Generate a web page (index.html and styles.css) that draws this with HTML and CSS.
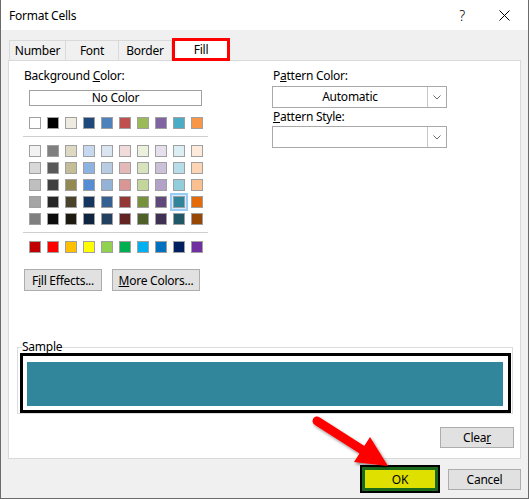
FILE: index.html
```html
<!DOCTYPE html>
<html>
<head>
<meta charset="utf-8">
<link rel="stylesheet" href="styles.css">
</head>
<body>
<div class="dialog">
  <div class="titlebar">
    <span class="title">Format Cells</span>
    <span class="help">?</span>
    <svg class="close" width="11" height="11" viewBox="0 0 11 11"><path d="M0.5 0.5 L10.5 10.5 M10.5 0.5 L0.5 10.5" stroke="#000" stroke-width="1" fill="none"/></svg>
  </div>
  <div class="tabs">
    <div class="tab tab-number">Number</div>
    <div class="tab tab-font">Font</div>
    <div class="tab tab-border">Border</div>
    <div class="tab active">Fill</div>
  </div>
  <div class="panel">
    <div class="top">
      <div class="bgcol">
        <div class="label">Background <u>C</u>olor:</div>
        <div class="nocolor">No Color</div>
        <div class="swrow">
          <span class="sw" style="background:#FFFFFF"></span>
          <span class="sw" style="background:#000000"></span>
          <span class="sw" style="background:#EEECE1"></span>
          <span class="sw" style="background:#1F497D"></span>
          <span class="sw" style="background:#4F81BD"></span>
          <span class="sw" style="background:#C0504D"></span>
          <span class="sw" style="background:#9BBB59"></span>
          <span class="sw" style="background:#8064A2"></span>
          <span class="sw" style="background:#4BACC6"></span>
          <span class="sw" style="background:#F79646"></span>
        </div>
        <div class="sep"></div>
        <div class="grid">
          <span class="sw" style="background:#F2F2F2"></span>
          <span class="sw" style="background:#7F7F7F"></span>
          <span class="sw" style="background:#DDD9C3"></span>
          <span class="sw" style="background:#C6D9F0"></span>
          <span class="sw" style="background:#DBE5F1"></span>
          <span class="sw" style="background:#F2DCDB"></span>
          <span class="sw" style="background:#EBF1DD"></span>
          <span class="sw" style="background:#E5E0EC"></span>
          <span class="sw" style="background:#DBEEF3"></span>
          <span class="sw" style="background:#FDEADA"></span>

          <span class="sw" style="background:#D8D8D8"></span>
          <span class="sw" style="background:#595959"></span>
          <span class="sw" style="background:#C4BD97"></span>
          <span class="sw" style="background:#8DB3E2"></span>
          <span class="sw" style="background:#B8CCE4"></span>
          <span class="sw" style="background:#E5B9B7"></span>
          <span class="sw" style="background:#D7E3BC"></span>
          <span class="sw" style="background:#CCC1D9"></span>
          <span class="sw" style="background:#B7DDE8"></span>
          <span class="sw" style="background:#FBD5B5"></span>

          <span class="sw" style="background:#BFBFBF"></span>
          <span class="sw" style="background:#3F3F3F"></span>
          <span class="sw" style="background:#938953"></span>
          <span class="sw" style="background:#548DD4"></span>
          <span class="sw" style="background:#95B3D7"></span>
          <span class="sw" style="background:#D99694"></span>
          <span class="sw" style="background:#C3D69B"></span>
          <span class="sw" style="background:#B2A2C7"></span>
          <span class="sw" style="background:#92CDDC"></span>
          <span class="sw" style="background:#FAC08F"></span>

          <span class="sw" style="background:#A5A5A5"></span>
          <span class="sw" style="background:#262626"></span>
          <span class="sw" style="background:#494429"></span>
          <span class="sw" style="background:#17365D"></span>
          <span class="sw" style="background:#366092"></span>
          <span class="sw" style="background:#953734"></span>
          <span class="sw" style="background:#76923C"></span>
          <span class="sw" style="background:#5F497A"></span>
          <span class="sw selected" style="background:#31859B"></span>
          <span class="sw" style="background:#E36C09"></span>

          <span class="sw" style="background:#7F7F7F"></span>
          <span class="sw" style="background:#0C0C0C"></span>
          <span class="sw" style="background:#1D1B10"></span>
          <span class="sw" style="background:#0F243E"></span>
          <span class="sw" style="background:#244061"></span>
          <span class="sw" style="background:#632423"></span>
          <span class="sw" style="background:#4F6128"></span>
          <span class="sw" style="background:#3F3151"></span>
          <span class="sw" style="background:#205867"></span>
          <span class="sw" style="background:#974806"></span>
        </div>
        <div class="sep"></div>
        <div class="swrow">
          <span class="sw" style="background:#C00000"></span>
          <span class="sw" style="background:#FF0000"></span>
          <span class="sw" style="background:#FFC000"></span>
          <span class="sw" style="background:#FFFF00"></span>
          <span class="sw" style="background:#92D050"></span>
          <span class="sw" style="background:#00B050"></span>
          <span class="sw" style="background:#00B0F0"></span>
          <span class="sw" style="background:#0070C0"></span>
          <span class="sw" style="background:#002060"></span>
          <span class="sw" style="background:#7030A0"></span>
        </div>
        <div class="btns">
          <div class="btn btn-fill">F<u>i</u>ll Effects...</div>
          <div class="btn btn-more"><u>M</u>ore Colors...</div>
        </div>
      </div>
      <div class="pattern">
        <div class="plabel">P<u>a</u>ttern Color:</div>
        <div class="select">
          <span class="val">Automatic</span>
          <span class="arr"><svg width="8" height="5" viewBox="0 0 8 5"><path d="M0.5 0.5 L4 4 L7.5 0.5" stroke="#6a6a6a" stroke-width="1" fill="none"/></svg></span>
        </div>
        <div class="plabel plabel2"><u>P</u>attern Style:</div>
        <div class="select select2">
          <span class="val"></span>
          <span class="arr"><svg width="8" height="5" viewBox="0 0 8 5"><path d="M0.5 0.5 L4 4 L7.5 0.5" stroke="#6a6a6a" stroke-width="1" fill="none"/></svg></span>
        </div>
      </div>
    </div>
    <fieldset class="sample">
      <legend>Sample</legend>
      <div class="samplebox"><div class="fillc"></div></div>
    </fieldset>
    <div class="clearrow"><div class="btn btn-clear">Clea<u>r</u></div></div>
  </div>
  <div class="footer">
    <div class="btn btn-ok">OK</div>
    <div class="btn btn-cancel">Cancel</div>
  </div>
  <svg class="arrow" width="529" height="499" viewBox="0 0 529 499">
    <defs>
      <filter id="sh" x="-20%" y="-20%" width="140%" height="140%">
        <feDropShadow dx="1.5" dy="2" stdDeviation="1.5" flood-color="#000" flood-opacity="0.45"/>
      </filter>
    </defs>
    <g filter="url(#sh)">
      <line x1="317" y1="421" x2="364" y2="451" stroke="#f00" stroke-width="9" stroke-linecap="round"/>
      <polygon points="388,466 354,462 370,437" fill="#f00"/>
    </g>
  </svg>
</div>
</body>
</html>
```

FILE: styles.css
```css
body {
  margin: 0;
  font-family: "Segoe UI", "Noto Sans", sans-serif;
  font-size: 12px;
  letter-spacing: -0.25px;
  color: #000;
}

.dialog {
  position: relative;
  width: 529px;
  height: 499px;
  box-sizing: border-box;
  border: 1px solid #6b6b6b;
  border-top: none;
  background: #f0f0f0;
}

.titlebar {
  height: 30px;
  background: #fff;
  display: flex;
  align-items: center;
  padding-left: 8px;
  padding-top: 1px;
  box-sizing: border-box;
}

.title {
  flex: 1;
}

.help {
  font-size: 14px;
  font-weight: 300;
  margin-right: 34px;
}

.close {
  margin-right: 18px;
}

.tabs {
  display: flex;
  align-items: flex-end;
  height: 22px;
  margin-top: 8px;
  padding-left: 8px;
  position: relative;
  z-index: 1;
}

.tab {
  height: 20px;
  box-sizing: border-box;
  border: 1px solid #d9d9d9;
  border-bottom: none;
  border-left: none;
  display: flex;
  align-items: center;
  justify-content: center;
  line-height: 16px;
}

.tab-number {
  width: 57px;
  border-left: 1px solid #d9d9d9;
}

.tab-font {
  width: 53px;
}

.tab-border {
  width: 53px;
}

.tab.active {
  width: 58px;
  height: 23px;
  border: 3px solid #f00;
  margin-bottom: -1px;
  background: #fff;
}

.panel {
  margin: 0 7px;
  height: 399px;
  box-sizing: border-box;
  background: #fff;
  border: 1px solid #d9d9d9;
}

.top {
  display: flex;
  padding: 7px 0 0 15px;
}

.bgcol {
  width: 248px;
}

.label {
  line-height: 16px;
}

.nocolor {
  margin: 6px 0 0 5px;
  width: 173px;
  height: 16px;
  box-sizing: border-box;
  border: 1px solid #a0a0a0;
  text-align: center;
  line-height: 14px;
}

.swrow {
  display: flex;
  gap: 6px;
  margin: 11px 0 0 5px;
}

.sep {
  height: 1px;
  width: 185px;
  margin: 7px 0 0 -1px;
  background: #cfcfcf;
}

.sep + .swrow {
  margin-top: 8px;
}

.grid {
  display: grid;
  grid-template-columns: repeat(10, 12px);
  column-gap: 6px;
  row-gap: 5px;
  margin: 8px 0 0 5px;
}

.sw {
  display: block;
  width: 12px;
  height: 12px;
  box-sizing: border-box;
  border: 1px solid #a0a0a0;
}

.sw.selected {
  box-shadow: 0 0 0 1px #d9ecfd, 0 0 0 3px #99cdf8;
}

.btns {
  display: flex;
  gap: 10px;
  margin-top: 16px;
}

.btn {
  box-sizing: border-box;
  background: #e1e1e1;
  border: 1px solid #adadad;
  display: flex;
  align-items: center;
  justify-content: center;
  white-space: nowrap;
}

.btn-fill {
  width: 78px;
  height: 22px;
}

.btn-more {
  width: 88px;
  height: 22px;
}

.pattern {
  width: 176px;
}

.plabel {
  line-height: 16px;
  padding-left: 1px;
}

.plabel2 {
  margin-top: 1px;
}

.select {
  margin-top: 2px;
  width: 175px;
  height: 22px;
  box-sizing: border-box;
  border: 1px solid #a9a9a9;
  display: flex;
}

.select2 {
  margin-top: 1px;
}

.val {
  flex: 1;
  text-align: center;
  line-height: 20px;
}

.arr {
  width: 18px;
  border-left: 1px solid #c8c8c8;
  display: flex;
  align-items: center;
  justify-content: center;
}

.sample {
  margin: 50px 7px 0 8px;
  padding: 0;
  border: 1px solid #dcdcdc;
  min-width: 0;
}

.sample legend {
  padding: 0;
  margin-left: 4px;
  line-height: 12px;
  font-size: 12px;
}

.samplebox {
  margin: 0 1px 0 2px;
  border: 3px solid #000;
  padding: 6px 5px 4px 4px;
}

.fillc {
  height: 44px;
  background: #32869b;
}

.clearrow {
  display: flex;
  justify-content: flex-end;
  margin: 13px 6px 0 0;
}

.btn-clear {
  width: 74px;
  height: 21px;
}

.footer {
  display: flex;
  justify-content: flex-end;
  align-items: center;
  gap: 8px;
  height: 28px;
  margin-top: 6px;
  padding-right: 7px;
}

.btn-ok {
  width: 80px;
  height: 28px;
  border: 2px solid #000;
  background: #e0e000;
  box-shadow: inset 0 0 0 3px #1b6a1b;
}

.btn-cancel {
  width: 73px;
  height: 21px;
}

.arrow {
  position: absolute;
  left: -1px;
  top: 0;
  pointer-events: none;
}
```
